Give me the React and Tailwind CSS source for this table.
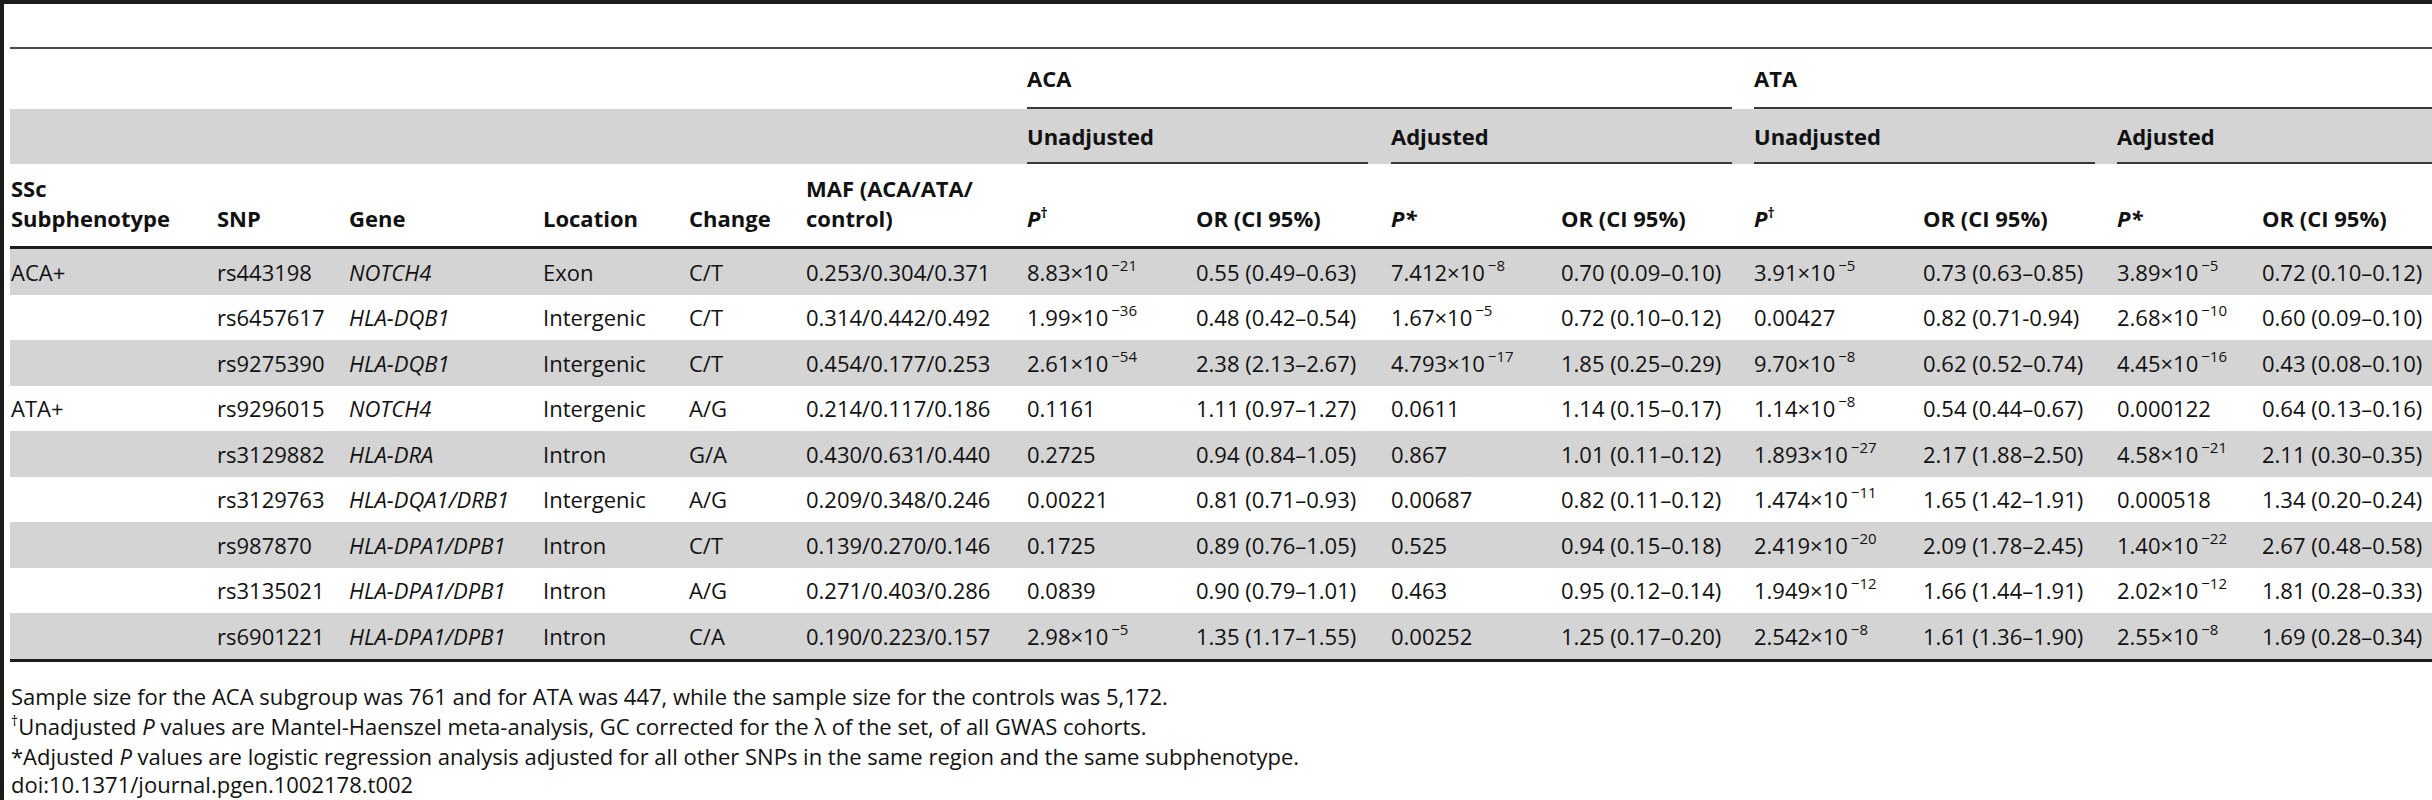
import React from "react";

const GRID =
  "grid grid-cols-[207px_132px_194px_146px_117px_221px_169px_195px_170px_193px_169px_194px_145px_170px]";

function Sci({ m, e }) {
  return (
    <span className="whitespace-nowrap">
      {m}×10
      <sup className="text-[15px] ml-[3px] relative -top-[10px]">−{e}</sup>
    </span>
  );
}

const rows = [
  ["ACA+", "rs443198", "NOTCH4", "Exon", "C/T", "0.253/0.304/0.371", ["8.83", "21"], "0.55 (0.49–0.63)", ["7.412", "8"], "0.70 (0.09–0.10)", ["3.91", "5"], "0.73 (0.63–0.85)", ["3.89", "5"], "0.72 (0.10–0.12)"],
  ["", "rs6457617", "HLA-DQB1", "Intergenic", "C/T", "0.314/0.442/0.492", ["1.99", "36"], "0.48 (0.42–0.54)", ["1.67", "5"], "0.72 (0.10–0.12)", "0.00427", "0.82 (0.71-0.94)", ["2.68", "10"], "0.60 (0.09–0.10)"],
  ["", "rs9275390", "HLA-DQB1", "Intergenic", "C/T", "0.454/0.177/0.253", ["2.61", "54"], "2.38 (2.13–2.67)", ["4.793", "17"], "1.85 (0.25–0.29)", ["9.70", "8"], "0.62 (0.52–0.74)", ["4.45", "16"], "0.43 (0.08–0.10)"],
  ["ATA+", "rs9296015", "NOTCH4", "Intergenic", "A/G", "0.214/0.117/0.186", "0.1161", "1.11 (0.97–1.27)", "0.0611", "1.14 (0.15–0.17)", ["1.14", "8"], "0.54 (0.44–0.67)", "0.000122", "0.64 (0.13–0.16)"],
  ["", "rs3129882", "HLA-DRA", "Intron", "G/A", "0.430/0.631/0.440", "0.2725", "0.94 (0.84–1.05)", "0.867", "1.01 (0.11–0.12)", ["1.893", "27"], "2.17 (1.88–2.50)", ["4.58", "21"], "2.11 (0.30–0.35)"],
  ["", "rs3129763", "HLA-DQA1/DRB1", "Intergenic", "A/G", "0.209/0.348/0.246", "0.00221", "0.81 (0.71–0.93)", "0.00687", "0.82 (0.11–0.12)", ["1.474", "11"], "1.65 (1.42–1.91)", "0.000518", "1.34 (0.20–0.24)"],
  ["", "rs987870", "HLA-DPA1/DPB1", "Intron", "C/T", "0.139/0.270/0.146", "0.1725", "0.89 (0.76–1.05)", "0.525", "0.94 (0.15–0.18)", ["2.419", "20"], "2.09 (1.78–2.45)", ["1.40", "22"], "2.67 (0.48–0.58)"],
  ["", "rs3135021", "HLA-DPA1/DPB1", "Intron", "A/G", "0.271/0.403/0.286", "0.0839", "0.90 (0.79–1.01)", "0.463", "0.95 (0.12–0.14)", ["1.949", "12"], "1.66 (1.44–1.91)", ["2.02", "12"], "1.81 (0.28–0.33)"],
  ["", "rs6901221", "HLA-DPA1/DPB1", "Intron", "C/A", "0.190/0.223/0.157", ["2.98", "5"], "1.35 (1.17–1.55)", "0.00252", "1.25 (0.17–0.20)", ["2.542", "8"], "1.61 (1.36–1.90)", ["2.55", "8"], "1.69 (0.28–0.34)"],
];

function Cell({ v, i }) {
  const content = Array.isArray(v) ? <Sci m={v[0]} e={v[1]} /> : v;
  return (
    <div className={`whitespace-nowrap ${i === 0 ? "pl-[1px]" : ""} ${i === 2 ? "italic" : ""}`}>
      {content}
    </div>
  );
}

export default function App() {
  return (
    <div className="w-[2432px] h-[800px] overflow-hidden bg-white border-t-4 border-l-4 border-[#1c1c1c] pl-[6px] font-['Open_Sans',sans-serif] text-[22px] text-[#111] leading-[30px]">
      {/* title area */}
      <div className="h-[45px] border-b-2 border-[#4a4a4a]" />

      {/* group row */}
      <div className={`${GRID} h-[60px] font-bold`}>
        <div className="col-span-6" />
        <div className="col-span-4 flex flex-col">
          <div className="flex-1 flex items-center">ACA</div>
          <div className="border-b-2 border-[#3a3a3a] mr-[22px]" />
        </div>
        <div className="col-span-4 flex flex-col">
          <div className="flex-1 flex items-center">ATA</div>
          <div className="border-b-2 border-[#3a3a3a]" />
        </div>
      </div>

      {/* sub group row */}
      <div className={`${GRID} h-[55px] bg-[#d4d4d4] font-bold`}>
        <div className="col-span-6" />
        <div className="col-span-2 flex flex-col">
          <div className="flex-1 flex items-center">Unadjusted</div>
          <div className="border-b-2 border-[#3a3a3a] mr-[23px]" />
        </div>
        <div className="col-span-2 flex flex-col">
          <div className="flex-1 flex items-center">Adjusted</div>
          <div className="border-b-2 border-[#3a3a3a] mr-[22px]" />
        </div>
        <div className="col-span-2 flex flex-col">
          <div className="flex-1 flex items-center">Unadjusted</div>
          <div className="border-b-2 border-[#3a3a3a] mr-[22px]" />
        </div>
        <div className="col-span-2 flex flex-col">
          <div className="flex-1 flex items-center">Adjusted</div>
          <div className="border-b-2 border-[#3a3a3a]" />
        </div>
      </div>

      {/* column header row */}
      <div className={`${GRID} h-[82px] items-end pb-[13px] font-bold`}>
        <div className="pl-[1px]">
          SSc
          <br />
          Subphenotype
        </div>
        <div>SNP</div>
        <div>Gene</div>
        <div>Location</div>
        <div>Change</div>
        <div>
          MAF (ACA/ATA/
          <br />
          control)
        </div>
        <div>
          <i>P</i>
          <sup className="text-[14px] relative -top-[9px]">†</sup>
        </div>
        <div>OR (CI 95%)</div>
        <div>
          <i>P*</i>
        </div>
        <div>OR (CI 95%)</div>
        <div>
          <i>P</i>
          <sup className="text-[14px] relative -top-[9px]">†</sup>
        </div>
        <div>OR (CI 95%)</div>
        <div>
          <i>P*</i>
        </div>
        <div>OR (CI 95%)</div>
      </div>

      <div className="h-[3px] bg-[#1c1c1c]" />

      {/* data rows */}
      {rows.map((r, ri) => (
        <div
          key={ri}
          className={`${GRID} h-[45.5px] items-center ${ri % 2 === 0 ? "bg-[#d4d4d4]" : "bg-white"}`}
        >
          {r.map((v, i) => (
            <Cell key={i} v={v} i={i} />
          ))}
        </div>
      ))}

      <div className="h-[3px] bg-[#1c1c1c]" />

      {/* footnotes */}
      <div className="mt-[19px] leading-[30px] pl-[1px]">
        <div>Sample size for the ACA subgroup was 761 and for ATA was 447, while the sample size for the controls was 5,172.</div>
        <div>
          <sup className="text-[14px] relative -top-[9px]">†</sup>Unadjusted <i>P</i> values are Mantel-Haenszel meta-analysis, GC corrected for the λ of the set, of all GWAS cohorts.
        </div>
        <div>
          *Adjusted <i>P</i> values are logistic regression analysis adjusted for all other SNPs in the same region and the same subphenotype.
        </div>
        <div className="leading-[26px]">doi:10.1371/journal.pgen.1002178.t002</div>
      </div>
    </div>
  );
}
